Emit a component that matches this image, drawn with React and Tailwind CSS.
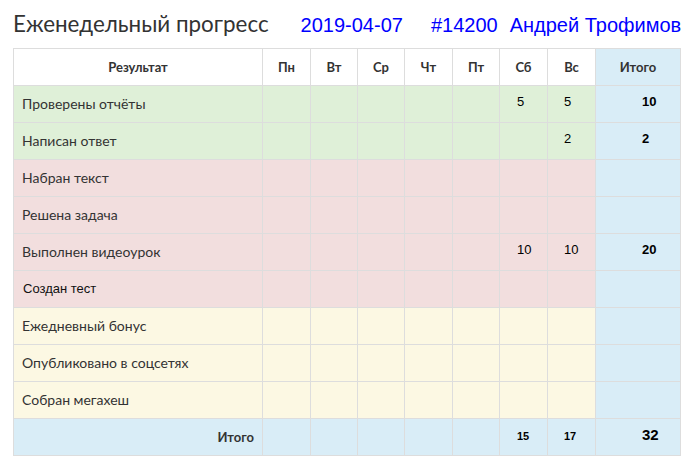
import React from "react";

const rows = [
  { name: "Проверены отчёты", color: "bg-[#dff0d8]", sb: "5", vs: "5", total: "10" },
  { name: "Написан ответ", color: "bg-[#dff0d8]", sb: "", vs: "2", total: "2" },
  { name: "Набран текст", color: "bg-[#f2dede]", sb: "", vs: "", total: "" },
  { name: "Решена задача", color: "bg-[#f2dede]", sb: "", vs: "", total: "" },
  { name: "Выполнен видеоурок", color: "bg-[#f2dede]", sb: "10", vs: "10", total: "20" },
  { name: "Создан тест", color: "bg-[#f2dede]", sb: "", vs: "", total: "", arial: true },
  { name: "Ежедневный бонус", color: "bg-[#fcf8e3]", sb: "", vs: "", total: "" },
  { name: "Опубликовано в соцсетях", color: "bg-[#fcf8e3]", sb: "", vs: "", total: "" },
  { name: "Собран мегахеш", color: "bg-[#fcf8e3]", sb: "", vs: "", total: "" },
];

const days = ["Пн", "Вт", "Ср", "Чт", "Пт", "Сб", "Вс"];

const cell = "border border-[#ddd] py-2 leading-5 h-[37px]";
const num = "font-['Liberation_Sans',Arial,sans-serif] text-[13px] text-black";

export default function App() {
  return (
    <div className="bg-white w-[690px] h-[465px] pl-[13px] font-['Lato',sans-serif] text-[#333]">
      <div className="h-[48px] flex items-baseline pt-[10px] whitespace-nowrap">
        <span className="text-[22.4px] leading-[28px] text-[#333]">Еженедельный прогресс</span>
        <span className="ml-[32px] text-[20px] leading-[28px] text-[#0000ff] font-['Liberation_Sans',Arial,sans-serif]">2019-04-07</span>
        <span className="ml-[28px] text-[20px] leading-[28px] text-[#0000ff] font-['Liberation_Sans',Arial,sans-serif]">#14200</span>
        <span className="ml-[12px] text-[20px] leading-[28px] text-[#0000ff] font-['Liberation_Sans',Arial,sans-serif]">Андрей Трофимов</span>
      </div>
      <table className="table-fixed border-collapse w-[667px] text-[14px]">
        <colgroup>
          <col className="w-[249px]" />
          <col className="w-[48px]" />
          <col className="w-[47px]" />
          <col className="w-[47px]" />
          <col className="w-[48px]" />
          <col className="w-[47px]" />
          <col className="w-[48px]" />
          <col className="w-[48px]" />
          <col className="w-[85px]" />
        </colgroup>
        <thead>
          <tr className="bg-white">
            <th className={`${cell} text-center text-[13px] font-bold px-2`}>Результат</th>
            {days.map((d) => (
              <th key={d} className={`${cell} text-center text-[13px] font-bold px-0`}>{d}</th>
            ))}
            <th className={`${cell} text-center text-[13px] font-bold bg-[#d9edf7]`}>Итого</th>
          </tr>
        </thead>
        <tbody>
          {rows.map((r) => (
            <tr key={r.name} className={r.color}>
              <td className={`${cell} px-2 ${r.arial ? "font-['Liberation_Sans',Arial,sans-serif] text-[13px] font-normal text-[#111] pl-[9px]" : "text-[14px]"}`}>{r.name}</td>
              <td className={cell}></td>
              <td className={cell}></td>
              <td className={cell}></td>
              <td className={cell}></td>
              <td className={cell}></td>
              <td className={`${cell} pl-[17px] ${num}`}><span className="relative -top-[2px]">{r.sb}</span></td>
              <td className={`${cell} pl-[16px] ${num}`}><span className="relative -top-[2px]">{r.vs}</span></td>
              <td className={`${cell} pl-[46px] bg-[#d9edf7] ${num} font-bold`}><span className="relative -top-[2px]">{r.total}</span></td>
            </tr>
          ))}
          <tr className="bg-[#d9edf7]">
            <td className={`${cell} px-2 text-right text-[13px] font-bold`}>Итого</td>
            <td className={cell}></td>
            <td className={cell}></td>
            <td className={cell}></td>
            <td className={cell}></td>
            <td className={cell}></td>
            <td className={`${cell} pl-[17px] font-['Liberation_Sans',Arial,sans-serif] text-[11px] font-bold text-black`}><span className="relative -top-[1px]">15</span></td>
            <td className={`${cell} pl-[16px] font-['Liberation_Sans',Arial,sans-serif] text-[11px] font-bold text-black`}><span className="relative -top-[1px]">17</span></td>
            <td className={`${cell} pl-[46px] font-['Liberation_Sans',Arial,sans-serif] text-[15px] font-bold text-black`}><span className="relative -top-[2px]">32</span></td>
          </tr>
        </tbody>
      </table>
    </div>
  );
}
